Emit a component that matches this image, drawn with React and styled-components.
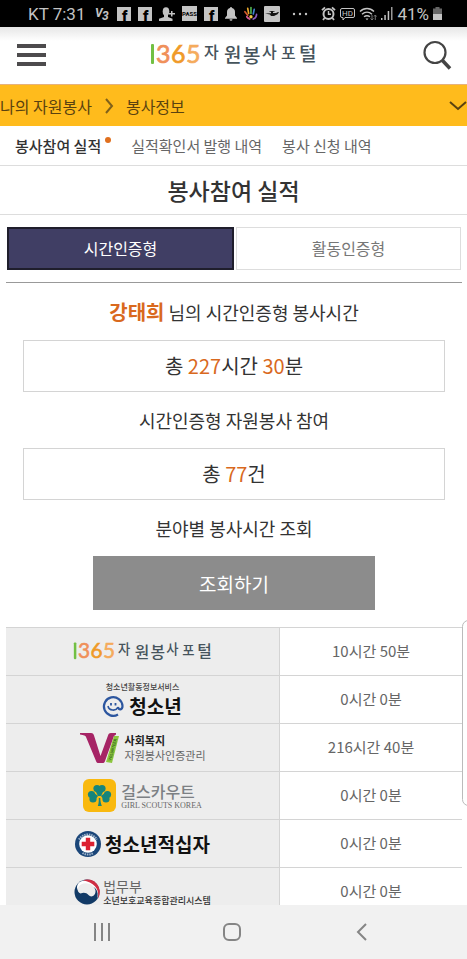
import React from "react";
import styled, { createGlobalStyle } from "styled-components";

const GlobalStyle = createGlobalStyle`
  * {
    box-sizing: border-box;
  }
  body {
    margin: 0;
    background: #fff;
    color: #333;
    font-family: "Noto Sans CJK KR", "Noto Sans", sans-serif;
  }
  button {
    font-family: inherit;
    padding: 0;
    border: none;
    background: none;
    cursor: pointer;
  }
  a {
    color: inherit;
    text-decoration: none;
  }
  svg {
    display: block;
    flex: none;
    overflow: visible;
  }
`;

const Screen = styled.div`
  position: relative;
  display: flex;
  flex-direction: column;
  height: 100vh;
  overflow: hidden;
`;

const StatusBar = styled.div`
  display: flex;
  flex: none;
  justify-content: space-between;
  align-items: center;
  height: 27px;
  padding: 0 25px 0 28px;
  background: #000;
  color: #c4c4c4;
  font-family: Roboto, sans-serif;
  font-size: 17px;
`;

const StatusGroup = styled.div`
  display: flex;
  align-items: center;
  gap: ${(props) => props.gap}px;
`;

const Clock = styled.span`
  padding-right: 5px;
  white-space: nowrap;
`;

const Header = styled.header`
  display: flex;
  flex: none;
  justify-content: space-between;
  align-items: center;
  height: 58px;
  padding: 0 15px 2px 16px;
  border-bottom: 1px solid #e6b27c;
  background: linear-gradient(#e6e6e6, #fff 14px);
`;

const IconButton = styled.button`
  display: flex;
  align-items: center;
  justify-content: center;
  width: 30px;
  height: 30px;
`;

const ExpandButton = styled(IconButton)`
  margin-right: -6px;
`;

const Breadcrumb = styled.nav`
  display: flex;
  flex: none;
  align-items: center;
  justify-content: space-between;
  height: 41px;
  overflow: hidden;
  background: #ffbb1c;
  color: #5a4210;
  font-size: 16px;
`;

const Crumbs = styled.div`
  display: flex;
  align-items: center;
  gap: 13px;
`;

const SubNav = styled.nav`
  display: flex;
  flex: none;
  align-items: center;
  gap: 20px;
  height: 40px;
  padding-left: 15px;
  border-bottom: 1px solid #ddd;
`;

const SubLink = styled.a`
  position: relative;
  margin-right: ${(props) => (props.$active ? "10px" : "0")};
  color: ${(props) => (props.$active ? "#333" : "#666")};
  font-size: 15px;
  font-weight: ${(props) => (props.$active ? 500 : 400)};
  white-space: nowrap;
`;

const Dot = styled.span`
  position: absolute;
  top: 2px;
  right: -10px;
  width: 6px;
  height: 6px;
  border-radius: 50%;
  background: #e0701e;
`;

const Title = styled.h1`
  flex: none;
  margin: 0;
  border-bottom: 1px solid #ddd;
  font-size: 23px;
  font-weight: 500;
  line-height: 48px;
  text-align: center;
`;

const Content = styled.main`
  flex: 1;
  min-height: 0;
  padding: 12px 5px 0 6px;
  overflow-y: auto;
  scrollbar-width: none;
`;

const Tabs = styled.div`
  display: flex;
  gap: 2px;
  margin-bottom: 1px;
  padding: 0 1px 12px;
  border-bottom: 1px solid #999;
`;

const Tab = styled.button`
  flex: 1;
  height: 43px;
  padding-bottom: 2px;
  border: ${(props) => (props.$active ? "2px solid #1f1e2c" : "1px solid #ddd")};
  background: ${(props) => (props.$active ? "#403e64" : "#fff")};
  color: ${(props) => (props.$active ? "#fff" : "#777")};
  font-size: 16px;
`;

const Heading = styled.h2`
  margin: 0;
  font-size: 18px;
  font-weight: 400;
  line-height: 56px;
  text-align: center;

  strong {
    color: #d9691e;
    font-size: 20px;
    font-weight: 700;
  }
`;

const Total = styled.p`
  margin: 0 17px;
  border: 1px solid #d4d4d4;
  font-size: 20px;
  line-height: 50px;
  text-align: center;

  em {
    color: #d9691e;
    font-style: normal;
  }
`;

const SearchButton = styled.button`
  display: block;
  width: 62%;
  height: 54px;
  margin: 0 auto 17px;
  background: #8c8c8c;
  color: #fff;
  font-size: 19px;
`;

const HoursTable = styled.table`
  width: 100%;
  table-layout: fixed;
  border-collapse: collapse;

  tr {
    height: 48px;
  }
  th,
  td {
    padding: 0;
    border-top: 1px solid #d4d4d4;
    border-bottom: 1px solid #d4d4d4;
    font-weight: 400;
    text-align: center;
  }
  th {
    width: 60%;
    border-right: 1px solid #d4d4d4;
    background: #ededed;
  }
  td {
    padding-bottom: 2px;
    color: #666;
    font-size: 15px;
  }
`;

const LogoRow = styled.div`
  display: flex;
  align-items: center;
  justify-content: center;
  gap: ${(props) => props.gap}px;
`;

const LogoLines = styled.div`
  display: flex;
  flex-direction: column;
  text-align: left;
`;

const LogoText = styled.span`
  color: ${(props) => props.color || "#111"};
  font-family: ${(props) =>
    props.$serif ? '"Liberation Serif", serif' : "inherit"};
  font-size: ${(props) => props.size}px;
  font-weight: ${(props) => props.weight || 700};
  line-height: ${(props) => props.line}px;
  white-space: nowrap;
`;

const EdgePanel = styled.div`
  position: absolute;
  top: 620px;
  right: -8px;
  width: 13px;
  height: 186px;
  border: 1px solid #bbb;
  border-radius: 7px;
  background: #fff;
`;

const NavBar = styled.nav`
  display: flex;
  flex: none;
  justify-content: center;
  height: 54px;
  padding-right: 4px;
  background: #f1f1f1;
`;

const NavButton = styled.button`
  display: flex;
  align-items: center;
  justify-content: center;
  width: 28%;
`;

const FacebookIcon = () => (
  <svg width="14" height="14" viewBox="0 0 14 14">
    <rect width="14" height="14" fill="#c4c4c4" />
    <text x="5" y="14" fontFamily="Roboto" fontWeight="900" fontSize="15">
      f
    </text>
  </svg>
);

const VaccineIcon = () => (
  <svg width="13" height="15" viewBox="0 0 13 15" fill="#c4c4c4">
    <text
      x="-2"
      y="11"
      fontFamily="Roboto"
      fontWeight="700"
      fontStyle="italic"
      fontSize="12"
    >
      V
    </text>
    <text
      x="5"
      y="14"
      fontFamily="Roboto"
      fontWeight="700"
      fontStyle="italic"
      fontSize="12"
    >
      3
    </text>
  </svg>
);

const PersonIcon = () => (
  <svg width="16" height="14" viewBox="0 0 16 14" fill="#c4c4c4">
    <ellipse cx="7" cy="4.5" rx="3.3" ry="4.3" />
    <path d="M5 7h4v3l4.500 1.700V14H0v-2.300L5 10zM12 4h1.500v2H16v1.500h-2.500v2H12v-2h-2V6h2z" />
  </svg>
);

const PassIcon = () => (
  <svg width="15" height="15" viewBox="0 0 15 15">
    <rect width="15" height="15" fill="#c4c4c4" />
    <text
      x="7.500"
      y="10"
      textAnchor="middle"
      fontFamily="Roboto"
      fontWeight="700"
      fontSize="6"
    >
      PASS
    </text>
  </svg>
);

const BellIcon = () => (
  <svg width="12" height="14" viewBox="0 0 12 14" fill="#c4c4c4">
    <path d="M5 1a1 1 0 0 1 2 0c2 .5 3 2 3 4v3.500L12 11v.7H0V11l2-2.500V5c0-2 1-3.500 3-4zM4.500 12.300h3a1.500 1.500 0 0 1-3 0z" />
  </svg>
);

const HandIcon = () => (
  <svg
    width="13"
    height="15"
    viewBox="0 0 14 16"
    fill="none"
    strokeWidth="1.800"
    strokeLinecap="round"
  >
    <path d="M1 6l3 4" stroke="#d65b2c" />
    <path d="M4 2.500l1 5.500" stroke="#e7a62b" />
    <path d="M7.500 1.500V8" stroke="#4fae4a" />
    <path d="M11 3.500l-1 5" stroke="#3f83cf" />
    <path d="M13.500 9c0 2-1.500 4-3.500 5" stroke="#8f5bc0" />
    <path d="M3 11.500c1 1.500 2 2 3 2.500" stroke="#d75a9a" />
    <circle cx="7.500" cy="11.500" r="1.800" fill="#f3c843" stroke="none" />
  </svg>
);

const PlaneIcon = () => (
  <svg width="16" height="16" viewBox="0 0 16 16">
    <rect width="16" height="16" rx="1" fill="#c4c4c4" />
    <path
      d="M1 7.500l6-.3V5.700H5.500V5h5v.7H9v1.200h3l2-.9 1 .3-1.500 2L10 10H7L6 8.500z"
      fill="#111"
    />
  </svg>
);

const DotsIcon = () => (
  <svg width="24" height="4" viewBox="0 0 24 4" fill="#c4c4c4">
    <circle cx="7" cy="2" r="1.200" />
    <circle cx="13" cy="2" r="1.200" />
    <circle cx="19" cy="2" r="1.200" />
  </svg>
);

const AlarmIcon = () => (
  <svg width="15" height="15" viewBox="0 0 15 15" fill="none" stroke="#c4c4c4">
    <circle cx="7.500" cy="8" r="5" strokeWidth="2" />
    <path d="M7.500 5v3.300H10" strokeWidth="1.400" />
    <path d="M1 4.200L4 1.300M14 4.200l-3-2.900M3.500 12l-1.500 2M11.500 12l1.500 2" strokeWidth="1.800" />
  </svg>
);

const HdIcon = () => (
  <svg width="15" height="14" viewBox="0 0 15 14">
    <path
      d="M2 1.500h11a1.500 1.500 0 0 1 1.500 1.500v6a1.500 1.500 0 0 1-1.500 1.500H5L3 13v-2.500H2A1.500 1.500 0 0 1 .5 9V3A1.500 1.500 0 0 1 2 1.500z"
      fill="none"
      stroke="#c4c4c4"
    />
    <text x="7.500" y="9" textAnchor="middle" fontFamily="Roboto" fontSize="8" fill="#c4c4c4">
      HD
    </text>
  </svg>
);

const WifiIcon = () => (
  <svg width="18" height="14" viewBox="0 0 18 14" fill="none" stroke="#c4c4c4">
    <path d="M1 4.500c4-4 10-4 14 0M3 7.300c3-2.700 7-2.700 10 0M5 9.800c2-1.500 4-1.500 6 0" strokeWidth="1.400" />
    <path d="M6.500 11.500h3L8 13.300z" fill="#c4c4c4" stroke="none" />
    <path d="M13 8v5m-1.500-1.500L13 13l1.500-1.500M16.300 13V8m-1.300 1.500L16.300 8l1.200 1.500" stroke="#777" />
  </svg>
);

const SignalIcon = () => (
  <svg width="12" height="13" viewBox="0 0 12 13" fill="#c4c4c4">
    <rect y="11" width="1.500" height="2" />
    <rect x="3.300" y="8" width="1.500" height="5" />
    <rect x="6.700" y="4" width="1.500" height="9" />
    <rect x="10" width="1.500" height="13" fill="#999" />
  </svg>
);

const BatteryIcon = () => (
  <svg width="9" height="13" viewBox="0 0 9 13">
    <path d="M2.500 0h4v1.500H9V7H0V1.500h2.500z" fill="#666" />
    <rect y="7" width="9" height="6" fill="#c4c4c4" />
  </svg>
);

const MenuIcon = () => (
  <svg width="29" height="22" viewBox="0 0 29 22" fill="#4d4b4d">
    <rect width="29" height="4" />
    <rect y="9" width="29" height="4" />
    <rect y="18" width="29" height="4" />
  </svg>
);

const SearchIcon = () => (
  <svg width="30" height="30" viewBox="0 0 30 30" fill="none" stroke="#444">
    <circle cx="13" cy="12.500" r="10.500" strokeWidth="2.200" />
    <path d="M20.500 20.500l7.500 8" strokeWidth="3.500" />
  </svg>
);

// letter, x, baseline, size: the wordmark mixes short and tall letters
const PORTAL_LETTERS = [
  ["자", 54, 17, 16],
  ["원", 74, 21, 19],
  ["봉", 93, 22, 19],
  ["사", 112, 17, 16],
  ["포", 131, 18, 16],
  ["털", 149, 20, 19],
];

const PortalLogo = ({ width }) => (
  <svg
    width={width}
    viewBox="0 0 168 28"
    role="img"
    aria-label="1365 자원봉사포털"
  >
    <rect x="1" y="3" width="3" height="20" rx="1" fill="#72c043" />
    <g fontFamily="Lato" fontSize="25" fontWeight="400" strokeWidth="0.700">
      <text x="6" y="22" fill="#f0905a" stroke="#f0905a">
        3
      </text>
      <text x="21" y="22" fill="#f09a28" stroke="#f09a28">
        6
      </text>
      <text x="36" y="22" fill="#f5ab5c" stroke="#f5ab5c">
        5
      </text>
    </g>
    <g fontFamily="Noto Sans CJK KR" fontWeight="500" fill="#46545c">
      {PORTAL_LETTERS.map(([letter, x, y, size]) => (
        <text key={letter} x={x} y={y} fontSize={size}>
          {letter}
        </text>
      ))}
    </g>
  </svg>
);

const YouthLogo = () => (
  <LogoLines>
    <LogoRow gap={0}>
      <LogoText size={8} line={12} weight={500} color="#444">
        청소년활동정보서비스
      </LogoText>
    </LogoRow>
    <LogoRow gap={5}>
      <svg width="21" height="22" viewBox="0 0 21 22" fill="none" stroke="#2c569f">
        <path
          d="M15 19.500A9.300 9.300 0 1 1 19.500 11c0 4-4 4.500-4.500 1"
          strokeWidth="2.200"
        />
        <path d="M5 11c1 5 8 5.500 10 1" strokeWidth="1.600" />
        <path d="M8 8v2.500M12.500 8v2.500" strokeWidth="1.800" />
      </svg>
      <LogoText size={19} line={26}>
        청소년
      </LogoText>
    </LogoRow>
  </LogoLines>
);

const WelfareLogo = () => (
  <LogoRow gap={5}>
    <svg width="40" height="32" viewBox="0 0 40 32">
      <path
        d="M0 1h11c2 0 2.500 1 3 2.500L20.500 24 28 3.500C28.500 2 29 1 31 1h5v1.500L34 4l-9 25c-.5 1.500-1 2-2.500 2h-4c-1.500 0-2-.5-2.500-2L6 5C5.500 3.500 4 3 0 2.500z"
        fill="#a62465"
      />
      <path d="M34 4h5l-7 27-6-1z" fill="#8dc63f" />
      <text
        transform="translate(31 29) rotate(-75)"
        fontFamily="Roboto"
        fontWeight="700"
        fontSize="4"
        fill="#33691e"
      >
        VOLUNTEER
      </text>
    </svg>
    <LogoLines>
      <LogoText size={11} line={15} color="#222">
        사회복지
      </LogoText>
      <LogoText size={11} line={15} weight={400} color="#666">
        자원봉사인증관리
      </LogoText>
    </LogoLines>
  </LogoRow>
);

const ScoutLogo = () => (
  <LogoRow gap={5}>
    <svg width="33" height="33" viewBox="0 0 33 33">
      <rect width="33" height="33" rx="6" fill="#f9b90f" />
      <g fill="#16857c">
        <circle cx="14" cy="9.500" r="3.600" />
        <circle cx="19" cy="9.500" r="3.600" />
        <circle cx="8.500" cy="15.500" r="3.600" />
        <circle cx="10" cy="20" r="3.600" />
        <circle cx="24.500" cy="15.500" r="3.600" />
        <circle cx="23" cy="20" r="3.600" />
        <path d="M12.500 12h8l-2.500 5h-3zM10 13l5 4-3 4zM23 13l-5 4 3 4z" />
        <path d="M15.800 19h1.500c0 3 .5 5 1.500 8h-4c1-3 1-5 1-8z" />
      </g>
    </svg>
    <LogoLines>
      <LogoText size={16} line={20} weight={500} color="#7c8084">
        걸스카우트
      </LogoText>
      <LogoText size={8} line={10} weight={400} color="#666" $serif>
        GIRL SCOUTS KOREA
      </LogoText>
    </LogoLines>
  </LogoRow>
);

const RedCrossLogo = () => (
  <LogoRow gap={4}>
    <svg width="26" height="26" viewBox="0 0 26 26">
      <circle cx="13" cy="13" r="13" fill="#1b4679" />
      <path
        d="M4 8.500A10.500 10.500 0 0 1 22 8.500M7.500 22A10.500 10.500 0 0 0 18.500 22"
        fill="none"
        stroke="#9fb4cb"
        strokeWidth="2"
        strokeDasharray="1.500 .8"
      />
      <circle cx="13" cy="13" r="8.800" fill="#fff" />
      <path d="M10.800 6.700h4.400v4.100h4.100v4.400h-4.100v4.100h-4.400v-4.100H6.700v-4.400h4.100z" fill="#dc2131" />
    </svg>
    <LogoText size={19} line={26}>
      청소년적십자
    </LogoText>
  </LogoRow>
);

const JusticeLogo = () => (
  <LogoRow gap={3}>
    <svg width="26" height="26" viewBox="0 0 26 26">
      <circle cx="13" cy="13" r="12.500" fill="#123a66" />
      <path
        d="M5 3.500A12.500 12.500 0 0 1 23 20c3-10-4-14-9-12.500-4 1-4 5-7.500 5C3 12.500 1.500 7 5 3.500z"
        fill="#fff"
      />
      <path
        d="M9 1.200A12.500 12.500 0 0 1 24 19.500C26 9 19 3.500 9 1.200z"
        fill="#cf2e43"
      />
      <path
        d="M7 5.500c6-3 13 0 14.500 6C22 17 17 19 14.500 16c-2-2.500-5-3-8-1.500C2.500 13 3 8 7 5.500z"
        fill="#ededed"
      />
    </svg>
    <LogoLines>
      <LogoText size={14} line={17} weight={400} color="#666">
        법무부
      </LogoText>
      <LogoText size={9} line={11} weight={500} color="#333">
        소년보호교육종합관리시스템
      </LogoText>
    </LogoLines>
  </LogoRow>
);

const rows = [
  {
    id: "portal",
    logo: (
      <LogoRow gap={0}>
        <PortalLogo width={140} />
      </LogoRow>
    ),
    time: "10시간 50분",
  },
  { id: "youth", logo: <YouthLogo />, time: "0시간 0분" },
  { id: "welfare", logo: <WelfareLogo />, time: "216시간 40분" },
  { id: "scout", logo: <ScoutLogo />, time: "0시간 0분" },
  { id: "redcross", logo: <RedCrossLogo />, time: "0시간 0분" },
  { id: "justice", logo: <JusticeLogo />, time: "0시간 0분" },
];

const App = () => (
  <Screen>
    <GlobalStyle />
    <StatusBar>
      <StatusGroup gap={7}>
        <Clock>KT 7:31</Clock>
        <VaccineIcon />
        <FacebookIcon />
        <FacebookIcon />
        <PersonIcon />
        <PassIcon />
        <FacebookIcon />
        <BellIcon />
        <HandIcon />
        <PlaneIcon />
        <DotsIcon />
      </StatusGroup>
      <StatusGroup gap={4}>
        <AlarmIcon />
        <HdIcon />
        <WifiIcon />
        <SignalIcon />
        <span>41%</span>
        <BatteryIcon />
      </StatusGroup>
    </StatusBar>

    <Header>
      <IconButton aria-label="메뉴">
        <MenuIcon />
      </IconButton>
      <a href="#home">
        <PortalLogo width={168} />
      </a>
      <IconButton aria-label="검색">
        <SearchIcon />
      </IconButton>
    </Header>

    <Breadcrumb>
      <Crumbs>
        <a href="#my">나의 자원봉사</a>
        <svg width="8" height="16" viewBox="0 0 8 16" fill="none" stroke="#80611a" strokeWidth="2">
          <path d="M1 1l6 7-6 7" />
        </svg>
        <a href="#info">봉사정보</a>
      </Crumbs>
      <ExpandButton aria-label="펼치기">
        <svg width="20" height="10" viewBox="0 0 20 10" fill="none" stroke="#5a4210" strokeWidth="2">
          <path d="M2 1l8 7 8-7" />
        </svg>
      </ExpandButton>
    </Breadcrumb>

    <SubNav>
      <SubLink href="#record" $active>
        봉사참여 실적
        <Dot />
      </SubLink>
      <SubLink href="#issue">실적확인서 발행 내역</SubLink>
      <SubLink href="#apply">봉사 신청 내역</SubLink>
    </SubNav>

    <Title>봉사참여 실적</Title>

    <Content>
      <Tabs>
        <Tab $active>시간인증형</Tab>
        <Tab>활동인증형</Tab>
      </Tabs>
      <Heading>
        <strong>강태희</strong> 님의 시간인증형 봉사시간
      </Heading>
      <Total>
        총 <em>227</em>시간 <em>30</em>분
      </Total>
      <Heading>시간인증형 자원봉사 참여</Heading>
      <Total>
        총 <em>77</em>건
      </Total>
      <Heading>분야별 봉사시간 조회</Heading>
      <SearchButton>조회하기</SearchButton>
      <HoursTable>
        <tbody>
          {rows.map((row) => (
            <tr key={row.id}>
              <th scope="row">{row.logo}</th>
              <td>{row.time}</td>
            </tr>
          ))}
        </tbody>
      </HoursTable>
    </Content>

    <EdgePanel />

    <NavBar>
      <NavButton aria-label="최근 앱">
        <svg width="18" height="18" viewBox="0 0 18 18" fill="#858585">
          <rect x="1" width="2" height="18" />
          <rect x="8" width="2" height="18" />
          <rect x="15" width="2" height="18" />
        </svg>
      </NavButton>
      <NavButton aria-label="홈">
        <svg width="18" height="18" viewBox="0 0 18 18" fill="none" stroke="#858585" strokeWidth="2">
          <rect x="1" y="1" width="16" height="16" rx="5" />
        </svg>
      </NavButton>
      <NavButton aria-label="뒤로">
        <svg width="11" height="18" viewBox="0 0 11 18" fill="none" stroke="#858585" strokeWidth="2">
          <path d="M10 1L2 9l8 8" />
        </svg>
      </NavButton>
    </NavBar>
  </Screen>
);

export default App;
